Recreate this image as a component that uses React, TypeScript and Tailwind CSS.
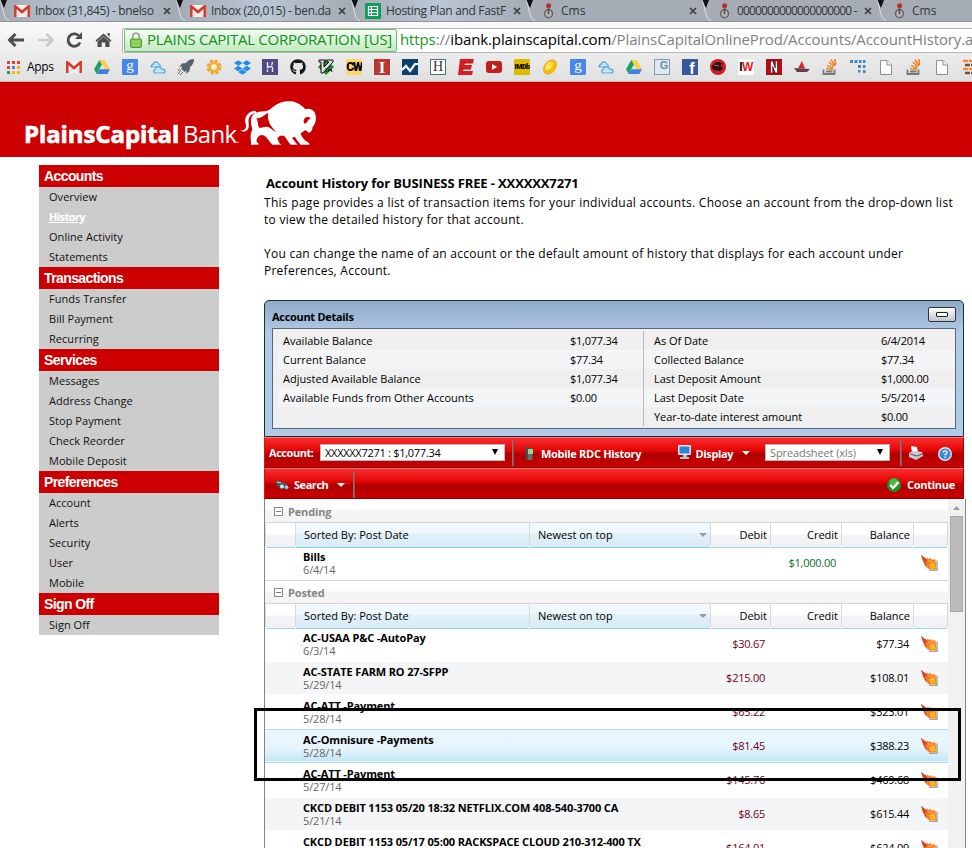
import React from "react";
import { FaDropbox, FaGithub } from "react-icons/fa";

const ui = "font-['Open_Sans','Noto_Sans',sans-serif]";

function Gmail() {
  return (
    <svg width="16" height="12" viewBox="0 0 16 12">
      <rect width="16" height="12" rx="1" fill="#f4f0ee" />
      <path d="M3 11.5 7 6.8M13 11.5 9 6.8" stroke="#d8d0cc" />
      <path d="M1.3 12V1.2L8 7l6.700-5.800V12" fill="none" stroke="#d5392f" strokeWidth="2.500" />
    </svg>
  );
}
function Drive() {
  return (
    <svg width="16" height="14" viewBox="0 0 16 14">
      <path d="M5.300 0h5.400L5.400 9 2.700 14 0 9.300z" fill="#1da362" />
      <path d="M5.300 0h5.400L16 9.300h-5.400z" fill="#ffcf48" />
      <path d="M5.400 9.300H16L13.300 14H2.700z" fill="#3c7de6" />
    </svg>
  );
}
function Tile({ c, t }: { c: string; t: string }) {
  return <span className={`flex size-4 items-center justify-center overflow-hidden leading-none ${c}`}>{t}</span>;
}
function Cloud() {
  return (
    <svg width="16" height="14" viewBox="0 0 16 14" fill="#c3e6f5" stroke="#55a8d2" strokeWidth="1.200">
      <path d="M1 7c0-2 1.500-2.300 2-2.300C3.500 1 8 1 8.500 4c2 0 2.500 3 .5 3z" />
      <path d="M5 13c-2-.5-2-3.500.5-3.500C6 6 11 6 11.500 8.800c2 0 3.500.5 3.500 2.200 0 1.500-1 2-2 2z" />
    </svg>
  );
}
function Page() {
  return (
    <svg width="12" height="15" viewBox="0 0 12 15" fill="#fcfcfc" stroke="#8d8d8d">
      <path d="M.5.5H7L11.500 5v9.500H.5z" />
      <path d="M7 .5V5h4.500" />
    </svg>
  );
}
function Joystick() {
  return (
    <svg width="11" height="16" viewBox="0 0 11 16">
      <circle cx="5.500" cy="10.700" r="4" fill="#b5b5b5" stroke="#666" strokeWidth="1.500" />
      <path d="M5.500 4v7" stroke="#555" strokeWidth="1.600" />
      <circle cx="5.600" cy="2.700" r="2.500" fill="#b8331f" />
    </svg>
  );
}
function Sheets() {
  return (
    <svg width="16" height="16" viewBox="0 0 16 16">
      <rect width="16" height="16" rx="1" fill="#0f9d58" />
      <path d="M3.500 3.500h9v9h-9zM3.500 6.500h9M3.500 9.500h9M6.500 3.500v9" fill="none" stroke="#fff" strokeWidth="1.200" />
    </svg>
  );
}
function StackOverflow() {
  return (
    <svg width="16" height="16" viewBox="0 0 16 16" fill="none">
      <path d="M1.500 10.500v4.500h11v-4.500M4 12.500h6.500" stroke="#777" strokeWidth="1.800" />
      <path d="m4 9.500 6.800.8M5 6.500l6.300 2.600M6.800 3.200l5.300 4.500" stroke="#e0913c" strokeWidth="1.700" />
      <path d="m9 .7 4 6M12.800 0l.9 6" stroke="#f48024" strokeWidth="1.600" />
    </svg>
  );
}

const googleTile = (
  <Tile c="rounded-[1px] bg-[#4787ed] pb-1 font-['Liberation_Serif',serif] text-[15px] text-white" t="g" />
);

const bookmarks: React.ReactNode[] = [
  <Gmail />,
  <Drive />,
  googleTile,
  <Cloud />,
  <svg width="17" height="16" viewBox="0 0 17 16" fill="#5a636b">
    <path d="M16 0c-4 0-6 1.500-8 4L4 4.500 1 8l3.500-.5L3 9.500 6.500 13l2-1.500L8 15l3.500-3 .5-4c2.500-2 4-4 4-8z" />
    <path d="M3 11 0 15M5 13l-3 3M1.500 9.500 0 12" stroke="#5a636b" />
  </svg>,
  <svg width="16" height="16" viewBox="0 0 16 16">
    <circle cx="8" cy="8" r="6" fill="none" stroke="#eba435" strokeWidth="3" strokeDasharray="3 1.700" />
    <circle cx="8" cy="8" r="4.300" fill="#fff1cf" stroke="#f0b13f" strokeWidth="3" />
  </svg>,
  <FaDropbox size={17} color="#1d8df0" />,
  <svg width="16" height="16" viewBox="0 0 16 16">
    <rect width="16" height="16" fill="#4f4b83" />
    <path d="M5.500 3v5.500c3-1.500 5-1.300 5 .5v4M10.500 3c0 1.200-.3 2-1 3M5.500 10.500V13" stroke="#e8e6f4" strokeWidth="1.400" fill="none" />
  </svg>,
  <FaGithub size={16} color="#16191c" />,
  <svg width="16" height="16" viewBox="0 0 16 16">
    <path d="m8 0 8 8-8 8-8-8z" fill="#168a35" />
    <path d="M1 1h6v2H6v5l5-5H9V1h6v2L5 14H3V3H1z" fill="#ddd" stroke="#111" />
    <path d="M8 9v4M10 13l1-3 1 2 1-2 1 3" stroke="#222" fill="none" />
  </svg>,
  <Tile c="bg-[#ffd668] font-['Roboto',sans-serif] text-[12px] font-black tracking-[-1.500px] text-black" t="CW" />,
  <Tile c="bg-[#b93632] font-['Liberation_Serif',serif] text-[17px] font-bold text-white" t="I" />,
  <svg width="16" height="16" viewBox="0 0 16 16">
    <rect width="16" height="16" fill="#09406e" />
    <path d="m0 11 4-4 4 5 5-7h3" fill="none" stroke="#fff" strokeWidth="2.200" />
  </svg>,
  <Tile c="border border-[#3c7975] bg-white font-['Liberation_Serif',serif] text-[14px] text-[#333]" t="H" />,
  <svg width="16" height="16" viewBox="0 0 16 16">
    <path d="M2 0h14l-1 4H7L6.500 6H14l-1 4H5.500L5 12h10l-1 4H0z" fill="#da1c22" />
    <path d="m5 4 10 0M4 10h9" stroke="#a91419" />
  </svg>,
  <svg width="16" height="12" viewBox="0 0 16 12">
    <rect width="16" height="12" rx="3" fill="#c31e1e" />
    <path d="m6 3 5 3-5 3z" fill="#fff" />
  </svg>,
  <Tile c="rounded-[1px] bg-[#dfbb00] font-['Roboto',sans-serif] text-[7px] font-black tracking-[-.4px] text-black" t="IMDb" />,
  <svg width="16" height="16" viewBox="0 0 16 16">
    <ellipse cx="8" cy="8" rx="5.500" ry="8" transform="rotate(38 8 8)" fill="#fbb90b" stroke="#d99808" strokeWidth=".5" />
    <ellipse cx="7" cy="7" rx="3" ry="5" transform="rotate(38 7 7)" fill="#ffe65a" />
  </svg>,
  googleTile,
  <Cloud />,
  <Drive />,
  <Tile c="border border-[#7c9db3] bg-[#dfe8ee] pb-1 pl-1 font-['Liberation_Sans',sans-serif] text-[11px] font-bold text-[#6e91aa]" t="G" />,
  <Tile c="bg-[#3a579b] pt-[3px] pl-1 font-['Liberation_Sans',sans-serif] text-[16px] font-bold text-white" t="f" />,
  <svg width="16" height="16" viewBox="0 0 16 16">
    <circle cx="8" cy="8" r="8" fill="#ca2024" />
    <path d="M2 7c3-5 9-5 11-2l-3 1 3 3-3 3-6-1-2-2z" fill="#2c1114" />
    <path d="m4 6 5 1" stroke="#db5a55" />
  </svg>,
  <span className="flex size-4 items-center justify-center overflow-hidden bg-white font-['Liberation_Sans',sans-serif] text-[12px] leading-none font-bold tracking-[-.5px] text-[#e51b24]">
    <span className="text-black">I</span>W
  </span>,
  <svg width="16" height="16" viewBox="0 0 16 16">
    <rect width="16" height="16" fill="#b00d12" />
    <path d="M4.500 2h2.200l2.600 7V2h2.200v12H9.300L6.700 7.500V14H4.500z" fill="#fff" stroke="#300" strokeWidth=".6" />
  </svg>,
  <svg width="16" height="12" viewBox="0 0 16 12">
    <path d="m8 0 3 7.500H4z" fill="#d6252b" />
    <path d="m0 7 16 1-3 3H3z" fill="#60414a" />
  </svg>,
  <StackOverflow />,
  <svg width="16" height="16" viewBox="0 0 16 16" fill="#3a8bc4">
    <path d="M0 1h3v3H0zM4.500 1h3v3h-3zM9 1h2.500v3H9zM13 1h2.500v3H13zM8 6h3v3H8zM13 6h2.500v3H13zM13 11h2.500v3H13zM8 11h2.500v2.500H8z" />
  </svg>,
  <Page />,
  <StackOverflow />,
  <Page />,
  <svg width="16" height="16" viewBox="0 0 16 16">
    <path d="M1 2h15M1 10h15" stroke="#f2902f" strokeWidth="2.500" strokeDasharray="5 1" />
    <path d="M3 6h13M3 14h13" stroke="#70533f" strokeWidth="2.500" strokeDasharray="5 1" />
  </svg>,
];

function Tab({ w, icon, label, tw, glow }: { w: string; icon: React.ReactNode; label: string; tw: string; glow?: boolean }) {
  return (
    <div className={`flex h-[21px] shrink-0 items-center ${w} ${glow ? "bg-linear-to-r from-[#a4abb4] via-[#bac7d5] to-[#a4abb4]" : "bg-[#a5acb5]"}`}>
      <svg className="shrink-0" width="14" height="21" viewBox="0 0 14 21">
        <path d="M0 0h7L4 8z" fill="#0e1318" />
        <path d="M0 0c3 5 3 20 9 20.500" fill="none" stroke="#eef0f2" strokeWidth=".8" />
      </svg>
      <span className="flex w-4 shrink-0 justify-center">{icon}</span>
      <span className={`ml-[5px] overflow-hidden text-[12px] leading-[19px] whitespace-nowrap text-[#32363b] ${tw}`}>{label}</span>
      <svg className="mr-[5px] ml-auto shrink-0" width="8" height="8" viewBox="0 0 8 8">
        <path d="m1 1 6 6M7 1 1 7" stroke="#3b3f44" strokeWidth="1.700" />
      </svg>
    </div>
  );
}

function Browser() {
  return (
    <div className="w-[972px]">
      <div className="flex h-[21px] w-[972px] overflow-hidden">
        <Tab w="w-[176px]" icon={<Gmail />} label="Inbox (31,845) - bnelso" tw="w-[121px] tracking-[-.35px]" glow />
        <Tab w="w-[175px]" icon={<Gmail />} label="Inbox (20,015) - ben.da" tw="w-[120px] tracking-[-.35px]" glow />
        <Tab w="w-[175px]" icon={<Sheets />} label="Hosting Plan and FastF" tw="w-[121px] tracking-[-.33px]" glow />
        <Tab w="w-[176px]" icon={<Joystick />} label="Cms" tw="w-[120px]" />
        <Tab w="w-[175px]" icon={<Joystick />} label="0000000000000000000 -" tw="w-[123px] tracking-[-.85px]" />
        <Tab w="w-[175px]" icon={<Joystick />} label="Cms" tw="w-[120px]" />
      </div>
      <div className="h-[32px] border-t border-[#8f949a] bg-linear-to-b from-[#fafafa] to-[#ececec]">
        <div className="flex h-[31px] items-center pt-[5px]">
          <svg className="ml-[7px] shrink-0" width="108" height="20" viewBox="0 0 108 20" fill="none">
            <path d="M17 10H3M8.500 4 2.500 10l6 6" stroke="#4d4d4d" strokeWidth="3" />
            <path d="M31 10h14M39.500 4l6 6-6 6" stroke="#c9c9c9" strokeWidth="2.500" />
            <path d="M73 12.500A6.200 6.200 0 1 1 71.500 5.500" stroke="#4d4d4d" strokeWidth="2.800" />
            <path d="M75 2v7h-7z" fill="#4d4d4d" />
            <path d="m88.500 10.500 8-7 8 7-1.200 1.200L96.500 6l-6.800 5.700zM90.500 11.500l6-5 6 5V17h-4.200v-4.500h-3.600V17h-4.200zM100.500 3h2.200v4l-2.200-2z" fill="#4d4d4d" />
          </svg>
          <div className="ml-[7px] flex h-[25px] flex-1 items-center overflow-hidden rounded-l-[2px] border border-r-0 border-[#b5b5b5] bg-white pl-px">
            <div className="flex h-[23px] w-[273px] shrink-0 items-center rounded-[2px] border border-[#72b972] bg-linear-to-b from-[#f5fbf5] to-[#c3e8c3] pl-[5px]">
              <svg width="12" height="16" viewBox="0 0 12 16">
                <path d="M2.700 8V4.500a3.300 3.300 0 0 1 6.600 0V8" fill="none" stroke="#8f9a8b" strokeWidth="1.500" />
                <rect x=".5" y="7" width="11" height="8.500" rx="1" fill="#7cc64a" stroke="#569c31" />
                <path d="M2 9.500h8M2 11.500h8M2 13.500h8" stroke="#b3e08e" strokeWidth=".7" />
              </svg>
              <span className="-mt-0.5 ml-[5px] text-[15px] tracking-[-.28px] whitespace-nowrap text-[#0c9412]">PLAINS CAPITAL CORPORATION [US]</span>
            </div>
            <div className="-mt-0.5 ml-[3px] text-[15px] tracking-[-.12px] whitespace-nowrap text-[#7f7f7f]">
              <span className="text-[#169a1b]">https</span>://<span className="text-black">ibank.plainscapital.com</span>/PlainsCapitalOnlineProd/Accounts/AccountHistory.a
            </div>
          </div>
        </div>
      </div>
      <div className="flex h-[29px] w-[972px] items-center overflow-hidden border-b border-[#bdbdbd] bg-linear-to-b from-[#ececec] to-[#e0e0e0]">
        <div className="flex w-[60px] shrink-0 items-center pl-[7px]">
          <svg width="13" height="13" viewBox="0 0 13 13">
            <path d="M0 0h3v3H0zM5 0h3v3H5zM10 0h3v3h-3zM0 5h3v3H0z" fill="#dd4437" />
            <path d="M5 5h3v3H5z" fill="#4a86e8" />
            <path d="M10 5h3v3h-3zM5 10h3v3H5zM10 10h3v3h-3z" fill="#f3b51d" />
            <path d="M0 10h3v3H0z" fill="#17a05e" />
          </svg>
          <span className="ml-[7px] text-[12px] tracking-[-.35px] text-black">Apps</span>
        </div>
        {bookmarks.map((b, i) => (
          <div key={i} className="flex w-7 shrink-0 items-center justify-center">{b}</div>
        ))}
      </div>
    </div>
  );
}

function Banner() {
  return (
    <header className="flex h-[75px] bg-[#cc0000] text-white">
      <div className="mt-[34px] ml-[24px] flex w-[216px] text-[24px] leading-[36px] whitespace-nowrap">
        <span className="w-[159px] font-bold tracking-[-.1px] [-webkit-text-stroke:.7px_white]">PlainsCapital</span>
        <span className="tracking-[-.7px]">Bank</span>
        <span className="text-[10px] leading-[46px]">.</span>
      </div>
      <svg className="mt-[18px]" width="77" height="46" viewBox="18 12 231 138">
        <path d="M19 103c8 2 16-3 17-11 1-9-5-14-2-24 3-13 14-23 30-24l4 7c-14 1-22 8-24 19-2 9 2 15 0 24-2 11-14 18-25 9z" fill="#fff" />
        <path
          d="M52 66C56 50 75 46 92 46c14-1 21-11 33-19 13-9 28-13 45-11 19 2 34 12 44 24 12-4 24 0 29 12 6 15 2 30-7 41-1 8-4 16-12 17l-9-8-15 10c2 9 8 18 16 23l10 7v4h-27l-9-12 4 12h-24c-8-8-12-19-20-27h-12l-8 8 6 14 6 5h-26c-10-7-14-20-25-27-7-4-15-1-19 4-3 5-5 9-4 14l5 5v4H51c1-13-4-26 1-38 2-5 3-8 2-13-3-8-4-21-2-29z"
          fill="#fff"
        />
        <path d="M67 66c14 4 24-11 36-15-4 18 3 32 13 45l10 12c-11-6-20-17-29-16-9 0-14 5-22 3-5-9-2-20-8-29z" fill="#c00" />
        <path d="M211 83c-5-9 0-20 10-20 6 0 10 3 8 5-5 2-8 5-9 11z" fill="#c00" />
        <path d="M174 126l8-4 19 27h-8z" fill="#c00" />
      </svg>
    </header>
  );
}

const menu: [string, string[]][] = [
  ["Accounts", ["Overview", "History", "Online Activity", "Statements"]],
  ["Transactions", ["Funds Transfer", "Bill Payment", "Recurring"]],
  ["Services", ["Messages", "Address Change", "Stop Payment", "Check Reorder", "Mobile Deposit"]],
  ["Preferences", ["Account", "Alerts", "Security", "User", "Mobile"]],
  ["Sign Off", ["Sign Off"]],
];

function Sidebar() {
  return (
    <nav className="mt-2 ml-[39px] w-[180px] shrink-0 self-start bg-[#cccccc]">
      {menu.map(([title, items]) => (
        <div key={title}>
          <h2 className="h-[22px] bg-[#cc0000] pl-[5px] font-['Liberation_Sans',sans-serif] text-[14px] leading-[22px] font-bold tracking-[-.6px] text-white">{title}</h2>
          {items.map((it) => (
            <div key={it} className={`h-5 pl-[10px] text-[11px] leading-[20px] ${it === "History" ? "font-bold tracking-[-.6px] text-white underline" : "tracking-[.04px] text-[#111]"}`}>
              {it}
            </div>
          ))}
        </div>
      ))}
    </nav>
  );
}

function DetailCol({ rows, cls, lab }: { rows: [string, string][]; cls: string; lab: string }) {
  return (
    <div className={cls}>
      {rows.map(([a, b], i) => (
        <div key={a} className={`flex h-[19px] leading-[19px] ${i % 2 ? "bg-[#f4f5f7]" : ""}`}>
          <span className={lab}>{a}</span>
          <span className="tracking-[-.25px]">{b}</span>
        </div>
      ))}
    </div>
  );
}

function Details() {
  return (
    <section className="h-[137px] w-[700px] rounded-t-[5px] border border-[#222c38] bg-linear-to-b from-[#8fa9c9] to-[#b1cae7] to-[24%] px-[7px]">
      <div className="flex h-[27px] items-center justify-between pt-[5px]">
        <h3 className="text-[11px] font-bold tracking-[-.3px] text-black">Account Details</h3>
        <span className="-mt-[5px] flex h-[15px] w-[28px] items-center justify-center rounded-[2px] border border-[#30343a] bg-linear-to-b from-white to-[#bfc4cb]">
          <span className="h-[5px] w-[12px] rounded-[1px] border border-[#222] bg-white" />
        </span>
      </div>
      <div className="flex h-[101px] border border-[#58677a] bg-[#efefef] pt-[2px] text-[11px] text-black">
        <DetailCol
          cls="w-[371px] pl-[5px]"
          lab="w-[292px] pl-[5px] tracking-[.02px]"
          rows={[["Available Balance", "$1,077.34"], ["Current Balance", "$77.34"], ["Adjusted Available Balance", "$1,077.34"], ["Available Funds from Other Accounts", "$0.00"]]}
        />
        <DetailCol
          cls="-ml-px h-[95px] flex-1 border-l border-[#bbb]"
          lab="w-[237px] pl-[10px] tracking-[-.03px]"
          rows={[["As Of Date", "6/4/2014"], ["Collected Balance", "$77.34"], ["Last Deposit Amount", "$1,000.00"], ["Last Deposit Date", "5/5/2014"], ["Year-to-date interest amount", "$0.00"]]}
        />
      </div>
    </section>
  );
}

const bar = "flex h-[31px] w-[700px] items-center border border-t-[#ff7777] border-b-[#830000] border-l-[#e01010] border-r-[#a00] bg-[linear-gradient(#fb2d2d_0%,#df0000_48%,#ad0000_52%,#ca0000_100%)] text-[11px] font-bold text-white";

function Caret() {
  return (
    <svg className="mt-px" width="8" height="4" viewBox="0 0 8 4">
      <path d="M0 0h8L4 4z" fill="#fff" />
    </svg>
  );
}
function SelectArrow() {
  return (
    <svg className="-mt-[3px]" width="6" height="6" viewBox="0 0 6 6">
      <path d="M0 0h6L3 6z" />
    </svg>
  );
}
function Divider({ c }: { c: string }) {
  return <span className={`h-[26px] w-[2px] border-l border-[#72787b] bg-[#a4494b] ${c}`} />;
}

function Toolbars() {
  return (
    <div>
      <div className={bar}>
        <span className="ml-[4px] w-[51px] pt-[2px] tracking-[-.45px]">Account:</span>
        <span className="flex h-[17px] w-[185px] items-center justify-between border border-[#b9b9b9] bg-white pt-px pr-[6px] pl-[4px] font-normal tracking-[-.28px] text-black">
          XXXXXX7271 : $1,077.34
          <SelectArrow />
        </span>
        <Divider c="ml-[7px]" />
        <svg className="ml-[11px]" width="9" height="14" viewBox="0 0 9 14">
          <path d="M0 0h2v2h6v12H1z" fill="#494d4b" />
          <path d="M3 3h5v5H3z" fill="#93d989" />
          <path d="M3 9h4M3 11h4M3 13h4" stroke="#8b9190" />
        </svg>
        <span className="ml-[7px] pt-[3px] tracking-[-.3px]">Mobile RDC History</span>
        <svg className="ml-auto" width="15" height="15" viewBox="0 0 15 15">
          <rect x="1" y="0" width="13" height="10" rx="1" fill="#dbeaf6" />
          <path d="M2.500 1.500h10v7h-10z" fill="#2f83d4" />
          <path d="M6 10h4v2h2v2H3v-2h3z" fill="#bcc2c8" />
        </svg>
        <span className="mr-[9px] ml-[4px] pt-[3px] tracking-[-.4px]">Display</span>
        <Caret />
        <span className="ml-[15px] flex h-[17px] w-[125px] items-center justify-between border border-[#b9b9b9] bg-white pt-px pr-[6px] pl-[4px] font-normal tracking-[-.1px] text-[#777]">
          Spreadsheet (xls)
          <SelectArrow />
        </span>
        <Divider c="ml-[10px]" />
        <svg className="mt-px ml-[6px]" width="16" height="14" viewBox="0 0 16 14">
          <path d="m3 0 6 1 1 5-6 1z" fill="#f7fafd" />
          <path d="m1 7 4-2 9 1 1 4-7 4-7-3z" fill="#c6c9cd" />
          <path d="m2 8 7 2 5-2" fill="none" stroke="#555" />
        </svg>
        <svg className="mt-[2px] mr-[11px] ml-[14px]" width="14" height="14" viewBox="0 0 14 14">
          <circle cx="7" cy="7" r="6.300" fill="#3b8ad8" stroke="#dbe9f7" strokeWidth="1.400" />
          <path d="M5 5.500c.3-2.500 4.300-2 4 .2-.2 1.300-2 1.200-2 2.800M7 9.600v1.400" fill="none" stroke="#fff" strokeWidth="1.300" />
        </svg>
      </div>
      <div className={`${bar} pt-[2px]`}>
        <svg className="mt-px ml-[10px]" width="14" height="10" viewBox="0 0 14 10">
          <path d="M0 2 4 0l4 2 4 2 2 4-3 2-3-2-2 1-3-2z" fill="#50545a" />
          <circle cx="7" cy="6.500" r="2" fill="#c7e4f4" />
          <circle cx="11.500" cy="7.200" r="1.800" fill="#a2cfec" />
          <path d="m2 2 4 1" stroke="#d5d5d5" />
        </svg>
        <span className="mr-[9px] ml-[5px] pt-[2px] tracking-[-.45px]">Search</span>
        <Caret />
        <Divider c="ml-2" />
        <svg className="ml-auto" width="14" height="14" viewBox="0 0 14 14">
          <circle cx="7" cy="7" r="7" fill="#189424" />
          <circle cx="7" cy="5" r="4.500" fill="#4fb84d" />
          <path d="m3 7 3 3 5.500-6" fill="none" stroke="#fff" strokeWidth="2.300" />
        </svg>
        <span className="mr-[8px] ml-[6px] pt-[2px] tracking-[-.28px]">Continue</span>
      </div>
    </div>
  );
}

function GroupHead({ t, c }: { t: string; c: string }) {
  return (
    <div className={`flex items-center border-b border-[#d5d5d5] bg-[linear-gradient(#fff_45%,#f5f5f7_50%,#f3f3f3)] pl-[9px] ${c}`}>
      <span className="flex size-[9px] items-center justify-center border border-[#8a8a8a] bg-white">
        <span className="h-px w-[5px] bg-[#777]" />
      </span>
      <span className="ml-[5px] pt-[2px] text-[11px] font-bold tracking-[-.15px] text-[#858585]">{t}</span>
    </div>
  );
}

const plain = "border-b border-[#9fd6f2] bg-[linear-gradient(#fff_45%,#f5f5f7_50%,#f1f1f3)]";
const blue = "border-b border-[#8ccdf0] bg-[linear-gradient(#f0f8fd_40%,#e1f1f8_45%,#d8ebf5)]";

function ColumnHead() {
  return (
    <div className="grid h-[23px] grid-cols-[29px_233px_180px_59px_70px_71px_33px] gap-x-px bg-[#dadada] pl-px text-[11px] leading-[24px] text-black">
      <div className={plain} />
      <div className={`pl-2 ${blue}`}>Sorted By: Post Date</div>
      <div className={`flex items-center justify-between pr-[3px] pl-2 ${blue}`}>
        Newest on top
        <svg width="8" height="4" viewBox="0 0 8 4"><path d="M0 0h8L4 4z" fill="#9a9a9a" /></svg>
      </div>
      <div className={`pr-[3px] text-right ${plain}`}>Debit</div>
      <div className={`pr-[3px] text-right ${plain}`}>Credit</div>
      <div className={`pr-[3px] text-right ${plain}`}>Balance</div>
      <div className={plain} />
    </div>
  );
}

function Ticket() {
  return (
    <svg width="17" height="16" viewBox="0 0 17 16">
      <path d="M8 15.500h8V5.500" fill="none" stroke="#a9a6a6" strokeWidth="1.500" />
      <path d="m0 0 5.500 4 1-1.500 1.300 1.500 1.500-1 1.200 1.500L14.500 4.500l1 10H8.500L6 12.500 4 11 2.500 7z" fill="#f57f28" />
      <path d="m0 0 5.500 4 .8 2.500-2.300.5 2 4-2-1.200L2 6z" fill="#d34a2c" />
      <path d="m8.500 9 5-2 1.300 6.500H9.500z" fill="#ffb81c" />
      <path d="m6.500 6 5 .5" stroke="#ffb24d" />
    </svg>
  );
}

type Row = { n: string; d: string; debit?: string; credit?: string; bal?: string };

function TxRow({ r, tone }: { r: Row; tone: string }) {
  return (
    <div className={`grid grid-cols-[464px_36px_71px_73px_39px] text-[11px] ${tone}`}>
      <div className="pt-[3px] pl-[38px] whitespace-nowrap">
        <div className="h-[13px] leading-[13px] font-bold tracking-[-.14px] text-black">{r.n}</div>
        <div className="h-[13px] leading-[13px] tracking-[-.15px] text-[#666]">{r.d}</div>
      </div>
      <div className="flex items-center justify-end pb-[2px] tracking-[-.25px] text-[#6e0020]">{r.debit}</div>
      <div className="flex items-center justify-end pb-[2px] tracking-[-.25px] text-[#08701a]">{r.credit}</div>
      <div className="flex items-center justify-end pb-[2px] tracking-[-.25px] text-black">{r.bal}</div>
      <div className="pt-[8px] pl-[12px]"><Ticket /></div>
    </div>
  );
}

const posted: Row[] = [
  { n: "AC-USAA P&C -AutoPay", d: "6/3/14", debit: "$30.67", bal: "$77.34" },
  { n: "AC-STATE FARM RO 27-SFPP", d: "5/29/14", debit: "$215.00", bal: "$108.01" },
  { n: "AC-ATT -Payment", d: "5/28/14", debit: "$65.22", bal: "$323.01" },
  { n: "AC-Omnisure -Payments", d: "5/28/14", debit: "$81.45", bal: "$388.23" },
  { n: "AC-ATT -Payment", d: "5/27/14", debit: "$145.76", bal: "$469.68" },
  { n: "CKCD DEBIT 1153 05/20 18:32 NETFLIX.COM 408-540-3700 CA", d: "5/21/14", debit: "$8.65", bal: "$615.44" },
  { n: "CKCD DEBIT 1153 05/17 05:00 RACKSPACE CLOUD 210-312-400 TX", d: "5/19/14", debit: "$164.01", bal: "$624.09" },
];
const normal = "h-[34px]";
const shaded = "h-[34px] bg-[linear-gradient(#f4f5f7_32px,#fff_32px)]";
const selected = "-mt-px h-[35px] pt-px bg-[linear-gradient(#b1dff3_1px,#e9f6fe_1px,#e6f5fd_19px,#c5e6f6_32px,#e4f5fd_32px,#e4f5fd_33px,#a9dcf2_33px,#a9dcf2_34px,#fff_34px)]";

function History() {
  return (
    <div className="flex h-[349px] w-[702px] overflow-hidden border-r border-l border-[#80858d] bg-white">
      <div className="w-[683px] shrink-0">
        <GroupHead t="Pending" c="h-6 pt-[2px]" />
        <ColumnHead />
        <div className="h-[35px] border-b border-[#d5d5d5] pt-px">
          <TxRow r={{ n: "Bills", d: "6/4/14", credit: "$1,000.00" }} tone={normal} />
        </div>
        <GroupHead t="Posted" c="h-[23px] pt-px" />
        <ColumnHead />
        <div className="pt-px">
          {posted.map((r, i) => (
            <TxRow key={i} r={r} tone={i === 3 ? selected : i === 1 || i === 5 ? shaded : normal} />
          ))}
        </div>
      </div>
      <div className="flex w-[17px] flex-col items-center bg-[#f1f1f1] pt-[7px]">
        <svg width="7" height="4" viewBox="0 0 7 4"><path d="M0 4h7L3.500 0z" fill="#999" /></svg>
        <div className="mt-[6px] h-[96px] w-[13px] border border-[#a8a8a8] bg-[#bcbcbc]" />
      </div>
    </div>
  );
}

export default function App() {
  return (
    <div className={`relative h-[848px] w-[972px] overflow-hidden bg-white ${ui}`}>
      <Browser />
      <Banner />
      <div className="flex">
        <Sidebar />
        <main className="ml-[45px] w-[702px] shrink-0">
          <div className="h-[143px] pt-[18px] text-[12px] leading-[17px] text-black">
            <h1 className="h-[19px] pl-[2px] text-[13px] font-bold tracking-[-.12px] whitespace-nowrap">Account History for BUSINESS FREE - XXXXXX7271</h1>
            <p className="tracking-[.285px] whitespace-nowrap">
              This page provides a list of transaction items for your individual accounts. Choose an account from the drop-down list
              <br />
              to view the detailed history for that account.
            </p>
            <p className="mt-[17px] tracking-[.25px] whitespace-nowrap">
              You can change the name of an account or the default amount of history that displays for each account under
              <br />
              Preferences, Account.
            </p>
          </div>
          <Details />
          <Toolbars />
          <History />
        </main>
      </div>
      <div className="absolute top-[708px] left-[254px] h-[73px] w-[707px] border-[3px] border-black" />
    </div>
  );
}
